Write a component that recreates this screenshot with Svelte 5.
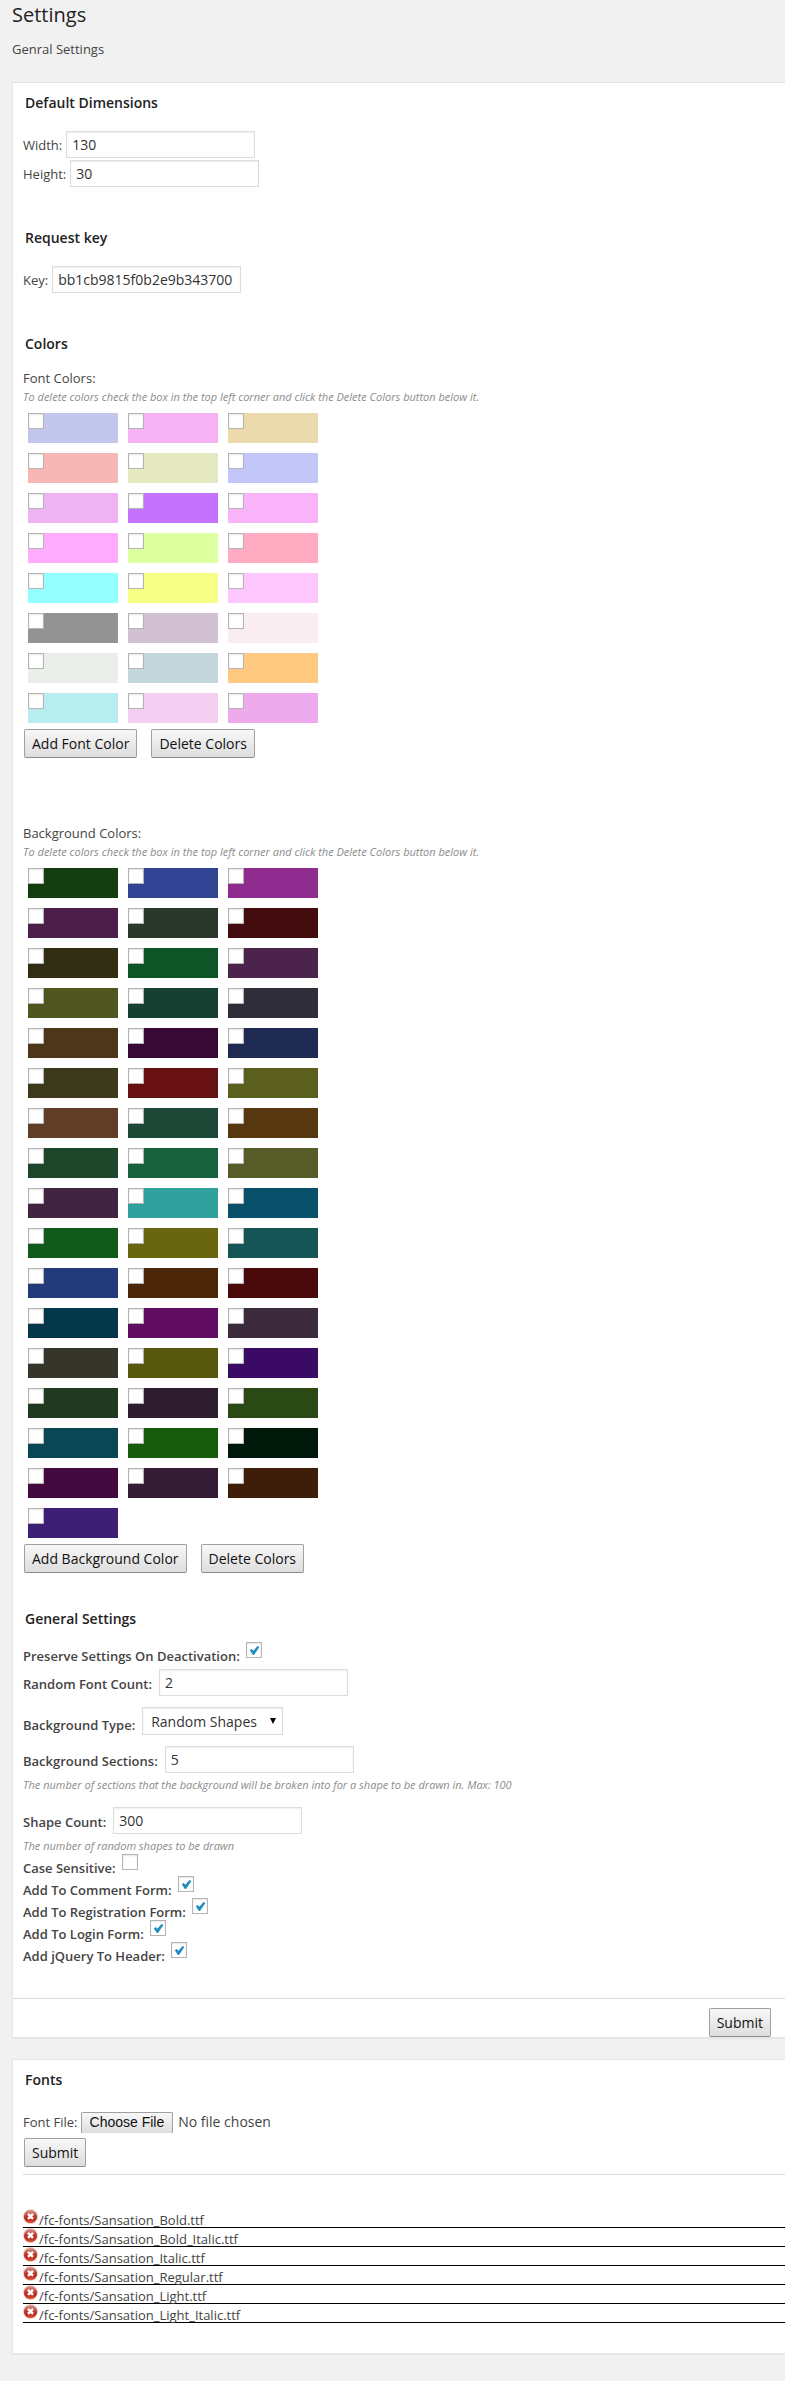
<script>
  const fontColors = [
    '#c2c6ea', '#f5b3f3', '#ebdbac',
    '#f7b7b7', '#e5eac1', '#c2c6f9',
    '#eeb3f3', '#c473ff', '#f9b3f9',
    '#ffacff', '#deff9e', '#ffacc2',
    '#94ffff', '#f5ff86', '#fdc7fd',
    '#939393', '#d1c1d1', '#f9edf1',
    '#e9efe8', '#c4d6da', '#ffc982',
    '#b8edef', '#f3cff2', '#edaaec'
  ];

  const backgroundColors = [
    '#143e0f', '#304493', '#902b90',
    '#4c1f4b', '#29382a', '#430d10',
    '#312e14', '#0e5427', '#4c234a',
    '#51551f', '#164031', '#2f2d3a',
    '#4d371b', '#370a35', '#1f2b52',
    '#3c3a1a', '#681112', '#5b5f1e',
    '#603d27', '#1d4737', '#573710',
    '#1d462a', '#17613d', '#575b28',
    '#412540', '#31a19d', '#09516b',
    '#125a1c', '#68660e', '#175456',
    '#233b7a', '#4c2608', '#490a0c',
    '#04374a', '#600c60', '#3c2b3c',
    '#35352a', '#57580d', '#3b0a64',
    '#223921', '#2e1d2e', '#2a4914',
    '#0a4653', '#175b0c', '#00190a',
    '#430a40', '#331c34', '#3f1e09',
    '#3d2075'
  ];

  const colorHint =
    'To delete colors check the box in the top left corner and click the Delete Colors button below it.';

  const formOptions = [
    { id: 'case-sensitive', label: 'Case Sensitive:', checked: false },
    { id: 'comment-form', label: 'Add To Comment Form:', checked: true },
    { id: 'registration-form', label: 'Add To Registration Form:', checked: true },
    { id: 'login-form', label: 'Add To Login Form:', checked: true },
    { id: 'jquery', label: 'Add jQuery To Header:', checked: true }
  ];

  const fontFiles = [
    '/fc-fonts/Sansation_Bold.ttf',
    '/fc-fonts/Sansation_Bold_Italic.ttf',
    '/fc-fonts/Sansation_Italic.ttf',
    '/fc-fonts/Sansation_Regular.ttf',
    '/fc-fonts/Sansation_Light.ttf',
    '/fc-fonts/Sansation_Light_Italic.ttf'
  ];
</script>

{#snippet swatches(colors, name)}
  <div class="swatches">
    {#each colors as color}
      <div class="swatch" style="background: {color}">
        <input type="checkbox" aria-label="{name} {color}" />
      </div>
    {/each}
  </div>
{/snippet}

{#snippet option(id, label, checked)}
  <div class="option">
    <label for={id}>{label}</label>
    <input {id} type="checkbox" {checked} />
  </div>
{/snippet}

<main>
  <h1>Settings</h1>
  <p class="subtitle">Genral Settings</p>

  <form class="panel">
    <div class="body">
      <section>
        <h2>Default Dimensions</h2>
        <div class="fields">
          <div class="field">
            <label for="width">Width:</label>
            <input id="width" type="text" value="130" />
          </div>
          <div class="field">
            <label for="height">Height:</label>
            <input id="height" type="text" value="30" />
          </div>
        </div>
      </section>

      <section>
        <h2>Request key</h2>
        <div class="fields">
          <div class="field">
            <label for="key">Key:</label>
            <input id="key" type="text" value="bb1cb9815f0b2e9b343700" />
          </div>
        </div>
      </section>

      <section>
        <h2>Colors</h2>
        <div class="palette">
          <p>Font Colors:</p>
          <p class="hint">{colorHint}</p>
          {@render swatches(fontColors, 'Font color')}
          <div class="actions">
            <button type="button">Add Font Color</button>
            <button type="button">Delete Colors</button>
          </div>
        </div>
        <div class="palette second">
          <p>Background Colors:</p>
          <p class="hint">{colorHint}</p>
          {@render swatches(backgroundColors, 'Background color')}
          <div class="actions">
            <button type="button">Add Background Color</button>
            <button type="button">Delete Colors</button>
          </div>
        </div>
      </section>

      <section class="general">
        <h2>General Settings</h2>
        {@render option('preserve', 'Preserve Settings On Deactivation:', true)}
        <div class="field">
          <label for="font-count">Random Font Count:</label>
          <input id="font-count" type="text" value="2" />
        </div>
        <div class="field choice">
          <label for="bg-type">Background Type:</label>
          <select id="bg-type">
            <option>Random Shapes</option>
          </select>
        </div>
        <div class="field">
          <label for="sections">Background Sections:</label>
          <input id="sections" type="text" value="5" />
        </div>
        <p class="hint">The number of sections that the background will be broken into for a shape to be drawn in. Max: 100</p>
        <div class="field shapes">
          <label for="shapes">Shape Count:</label>
          <input id="shapes" type="text" value="300" />
        </div>
        <p class="hint">The number of random shapes to be drawn</p>
        <div class="options">
          {#each formOptions as item}
            {@render option(item.id, item.label, item.checked)}
          {/each}
        </div>
      </section>
    </div>
    <div class="footer">
      <button type="button">Submit</button>
    </div>
  </form>

  <div class="panel fonts">
    <div class="body">
      <h2>Fonts</h2>
      <form>
        <div class="upload">
          <label for="font-file">Font File:</label>
          <input id="font-file" type="file" />
        </div>
        <div class="actions">
          <button type="button">Submit</button>
        </div>
      </form>
      <ul>
        {#each fontFiles as file}
          <li>
            <button type="button" class="remove" aria-label="Delete {file}">
              <svg width="15" height="15" viewBox="0 0 15 15">
                <defs>
                  <linearGradient id="ball" x1="0" y1="0" x2="0" y2="1">
                    <stop offset="0" stop-color="#d99a90" />
                    <stop offset="0.45" stop-color="#bb3a2e" />
                    <stop offset="0.7" stop-color="#b92a20" />
                    <stop offset="1" stop-color="#e4603c" />
                  </linearGradient>
                </defs>
                <circle cx="7.5" cy="7.5" r="7.5" fill="#ecd0cb" />
                <circle cx="7.5" cy="7.7" r="6.6" fill="url(#ball)" />
                <path d="M5 4.8l5 5M10 4.8l-5 5" stroke="#fff" stroke-width="2.4" />
              </svg>
            </button>
            <span>{file}</span>
          </li>
        {/each}
      </ul>
    </div>
  </div>
</main>

<style>
  :global(body) {
    margin: 0;
    background: #f1f1f1;
  }

  main {
    padding: 0 0 28px 12px;
    font: 13px/18px 'Open Sans', sans-serif;
    color: #444;
  }

  h1,
  h2,
  p,
  ul {
    margin: 0;
    padding: 0;
  }

  h1 {
    font-size: 20px;
    line-height: 29px;
    font-weight: 400;
    color: #222;
  }

  .subtitle {
    margin-top: 11px;
  }

  .panel {
    margin-top: 24px;
    background: #fff;
    border: 1px solid #e5e5e5;
    border-right: 0;
    box-shadow: 0 1px 1px rgba(0, 0, 0, 0.04);
  }

  .body {
    padding: 10px 0 0 10px;
  }

  h2 {
    margin-left: 2px;
    font-size: 14px;
    line-height: 19px;
    font-weight: 600;
    color: #222;
  }

  section + section {
    margin-top: 41px;
  }

  .fields {
    display: flex;
    flex-direction: column;
    gap: 2px;
    margin-top: 19px;
  }

  .field {
    display: flex;
    align-items: center;
    gap: 4px;
  }

  input,
  select,
  button {
    box-sizing: border-box;
    margin: 0;
    font: 14px/19px 'Open Sans', sans-serif;
  }

  input[type='text'],
  select {
    border: 1px solid #ddd;
    background-color: #fff;
    box-shadow: inset 0 1px 2px rgba(0, 0, 0, 0.07);
    color: #333;
  }

  input[type='text'] {
    width: 189px;
    height: 27px;
    padding: 3px 5px;
  }

  select {
    appearance: none;
    height: 28px;
    padding: 2px 25px 2px 8px;
    border-radius: 0;
    background-image: url("data:image/svg+xml,%3Csvg xmlns='http://www.w3.org/2000/svg' width='6' height='6'%3E%3Cpath d='M0 0h6L3 6z'/%3E%3C/svg%3E");
    background-repeat: no-repeat;
    background-position: right 6px top 10px;
  }

  input[type='checkbox'] {
    appearance: none;
    flex: none;
    display: block;
    width: 16px;
    height: 16px;
    border: 1px solid #b4b4b4;
    background: #fff;
    box-shadow: inset 0 1px 2px rgba(0, 0, 0, 0.1);
  }

  input[type='checkbox']:checked {
    background: #fff url("data:image/svg+xml,%3Csvg xmlns='http://www.w3.org/2000/svg' width='14' height='14'%3E%3Cpath d='M2.8 7.2l1.9-1.3 1.7 1.9 4.1-4.7 1.9 1-5.4 7.8H5.9z' fill='%231e8cbe'/%3E%3C/svg%3E") center no-repeat;
  }

  button {
    height: 29px;
    padding: 0 7px;
    border: 1px solid #a0a0a0;
    border-bottom-color: #8c8c8c;
    border-radius: 2px;
    background: linear-gradient(#f8f8f8, #dddddd);
    color: #111;
  }

  .palette {
    margin-top: 16px;
  }

  .palette.second {
    margin-top: 66px;
  }

  .hint {
    margin-top: 2px;
    font-size: 11px;
    line-height: 15px;
    font-style: italic;
    color: #8c8c8c;
  }

  .swatches {
    display: grid;
    grid-template-columns: repeat(3, 90px);
    grid-auto-rows: 30px;
    gap: 10px;
    margin: 9px 0 0 5px;
  }

  .actions {
    display: flex;
    gap: 14px;
    margin: 6px 0 0 1px;
  }

  section.general {
    margin-top: 36px;
  }

  .general label {
    font-weight: 600;
  }

  .general .field {
    align-items: flex-end;
    gap: 7px;
    margin-top: 11px;
  }

  .general .field label {
    margin-bottom: 3px;
  }

  .general .choice label {
    margin-bottom: 1px;
  }

  .general .option + .field {
    margin-top: 4px;
  }

  .general .shapes {
    margin-top: 15px;
  }

  .general .hint {
    margin-top: 4px;
  }

  .option {
    display: flex;
    align-items: flex-end;
    gap: 6px;
    height: 22px;
  }

  .option input {
    align-self: flex-start;
    margin-top: -1px;
  }

  h2 + .option {
    margin-top: 15px;
  }

  .options {
    margin-top: 2px;
  }

  .footer {
    display: flex;
    justify-content: flex-end;
    margin-top: 33px;
    padding: 9px 14px 0 0;
    border-top: 1px solid #ddd;
  }

  .fonts {
    margin-top: 21px;
  }

  .fonts .body {
    padding-bottom: 30px;
  }

  .upload {
    display: flex;
    align-items: center;
    gap: 3px;
    margin-top: 22px;
  }

  input[type='file'] {
    height: 22px;
    line-height: 22px;
    color: #444;
  }

  input[type='file']::file-selector-button {
    box-sizing: border-box;
    height: 22px;
    margin: 0 5px 0 0;
    padding: 0 8px;
    border: 1px solid #a0a0a0;
    border-bottom-color: #8c8c8c;
    border-radius: 2px;
    background: linear-gradient(#f8f8f8, #dddddd);
    color: #111;
    font: 14px/19px 'Liberation Sans', sans-serif;
  }

  .upload + .actions {
    margin-top: 5px;
  }

  ul {
    margin-top: 7px;
    padding-top: 34px;
    border-top: 1px solid #ddd;
    list-style: none;
  }

  li {
    display: flex;
    align-items: flex-start;
    gap: 1px;
    box-sizing: border-box;
    height: 19px;
    border-bottom: 1px solid #000;
    line-height: 22px;
  }

  .remove {
    height: 15px;
    padding: 0;
    border: 0;
    background: none;
  }

  .remove svg {
    display: block;
  }
</style>
